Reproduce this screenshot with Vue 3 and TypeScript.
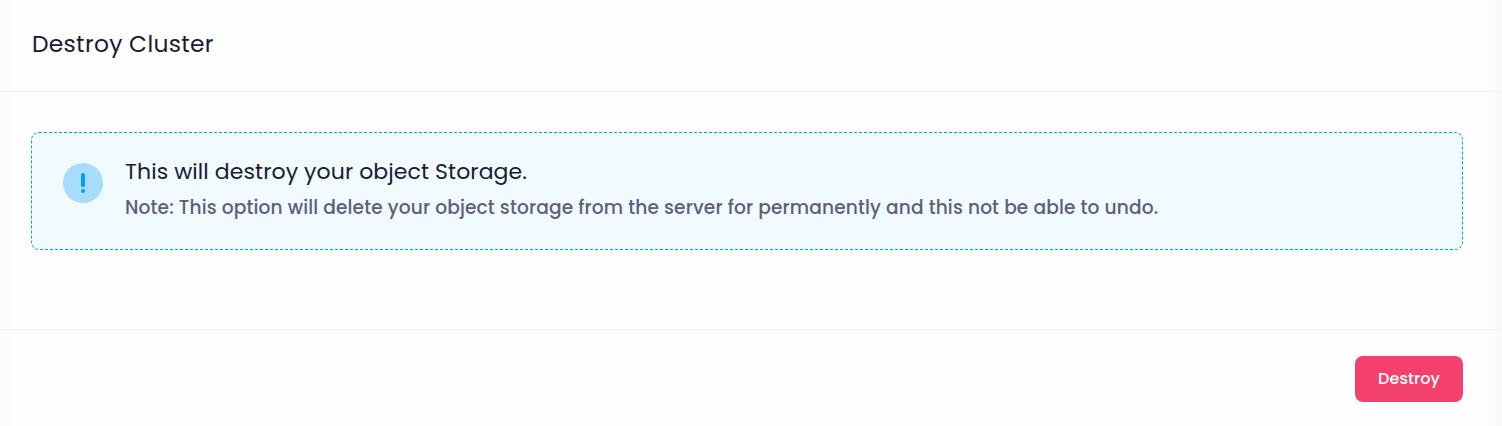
<script setup lang="ts">
const title: string = 'Destroy Cluster'
const heading: string = 'This will destroy your object Storage.'
const note: string =
  'Note: This option will delete your object storage from the server for permanently and this not be able to undo.'
</script>

<template>
  <section class="card">
    <header class="head">
      <h2 class="title">{{ title }}</h2>
    </header>
    <div class="body">
      <div class="notice">
        <svg class="icon" width="40" height="40" viewBox="0 0 40 40">
          <circle cx="20" cy="20" r="20" fill="#a8dcfc" />
          <rect x="18" y="10" width="4" height="14" rx="1.8" fill="#009ef7" />
          <rect x="18" y="26" width="4" height="4" rx="2" fill="#009ef7" />
        </svg>
        <div class="copy">
          <h3 class="heading">{{ heading }}</h3>
          <p class="note">{{ note }}</p>
        </div>
      </div>
    </div>
    <footer class="foot">
      <button class="destroy" type="button">Destroy</button>
    </footer>
  </section>
</template>

<style>
body {
  margin: 0;
  background: #fefefe;
}
</style>

<style scoped>
.card {
  box-sizing: border-box;
  height: 426px;
  overflow: hidden;
  background:
    linear-gradient(to right, #fcfcfc, #fdfdfd) left / 13px 100% no-repeat,
    linear-gradient(to right, #fefefe, #fcfcfc 60%, #f8f8f8) right / 20px 100% no-repeat,
    #fefefe;
  font-family: Poppins, Lato, sans-serif;
}
.head {
  box-sizing: border-box;
  height: 92px;
  padding: 28px 32px;
  border-bottom: 1px solid #eeeff0;
}
.body {
  box-sizing: border-box;
  height: 238px;
  padding: 40px 39px 0 31px;
  border-bottom: 1px solid #eeeff0;
}
.notice {
  box-sizing: border-box;
  display: flex;
  gap: 22px;
  height: 118px;
  padding: 24px 31px;
  border: 1px dashed #009ef7;
  border-radius: 8px;
  background: #f1faff;
}
.icon {
  flex: none;
  margin-top: 6px;
}
.title,
.heading,
.note {
  margin: 0;
  white-space: nowrap;
}
.title {
  font-size: 23.4px;
  font-weight: 400;
  line-height: 32px;
  letter-spacing: 0.28px;
  color: #181c32;
}
.heading {
  font-size: 22px;
  font-weight: 400;
  line-height: 30px;
  letter-spacing: 0.09px;
  color: #181c32;
}
.note {
  margin-top: 7px;
  font-size: 18.6px;
  font-weight: 500;
  line-height: 28px;
  letter-spacing: 0.13px;
  color: #5f5e7b;
}
.foot {
  display: flex;
  justify-content: flex-end;
  padding: 26px 39px 0 0;
}
.destroy {
  width: 108px;
  height: 46px;
  padding: 0 0 2px;
  border: 0;
  border-radius: 8px;
  background: #f4416c;
  color: #fff;
  font-family: inherit;
  font-size: 16px;
  font-weight: 500;
  letter-spacing: 0.08px;
}
</style>
